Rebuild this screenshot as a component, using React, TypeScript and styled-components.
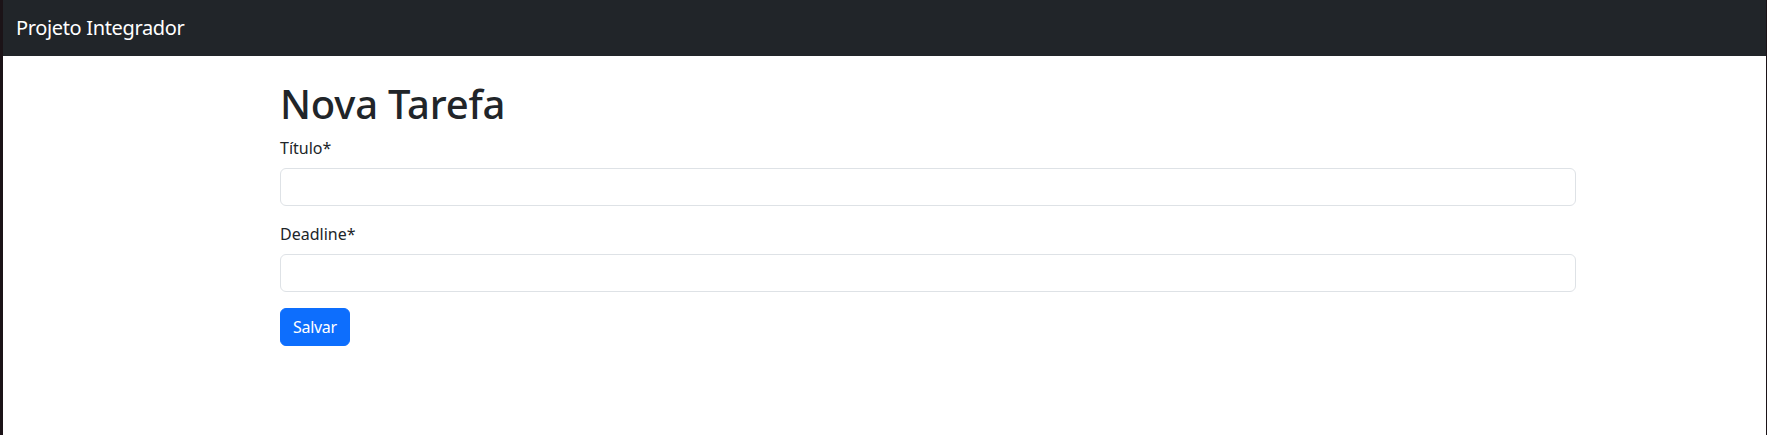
import React from "react";
import styled, { createGlobalStyle } from "styled-components";

const GlobalStyle = createGlobalStyle`
  * { box-sizing: border-box; }
  html, body { margin: 0; padding: 0; background: #fff; }
  body {
    font-family: "Noto Sans", "Open Sans", sans-serif;
    color: #212529;
    font-size: 16px;
    line-height: 1.5;
    border-left: 3px solid #1b1317;
    border-right: 1px solid #1b1317;
    min-height: 435px;
  }
`;

const Navbar = styled.nav`
  height: 56px;
  background: #212529;
  display: flex;
  align-items: center;
  padding: 0 13px;
`;

const Brand = styled.a`
  color: #fff;
  font-size: 20px;
  line-height: 30px;
  letter-spacing: -0.35px;
  text-decoration: none;
`;

const Main = styled.main`
  width: 1296px;
  margin-left: 277px;
  padding-top: 24px;
`;

const Title = styled.h1`
  margin: 0 0 8px;
  font-size: 40px;
  font-weight: 500;
  line-height: 48px;
  letter-spacing: -0.2px;
  color: #212529;
`;

const Form = styled.form`
  display: flex;
  flex-direction: column;
  align-items: flex-start;
`;

const Field = styled.div`
  width: 100%;
  margin-bottom: 16px;
`;

const Label = styled.label`
  display: block;
  font-size: 16px;
  line-height: 24px;
  margin-bottom: 8px;
`;

const Input = styled.input`
  display: block;
  width: 100%;
  height: 38px;
  padding: 6px 12px;
  font-size: 16px;
  font-family: inherit;
  border: 1px solid #dee2e6;
  border-radius: 6px;
  background: #fff;
  color: #212529;
  outline: none;
`;

const Button = styled.button`
  height: 38px;
  padding: 0 12px;
  font-family: inherit;
  font-size: 16px;
  letter-spacing: -0.3px;
  color: #fff;
  background: #0d6efd;
  border: 1px solid #0d6efd;
  border-radius: 6px;
  cursor: pointer;
`;

export default function App() {
  return (
    <>
      <GlobalStyle />
      <Navbar>
        <Brand href="#">Projeto Integrador</Brand>
      </Navbar>
      <Main>
        <Title>Nova Tarefa</Title>
        <Form onSubmit={(e) => e.preventDefault()}>
          <Field>
            <Label htmlFor="titulo">Título*</Label>
            <Input id="titulo" type="text" />
          </Field>
          <Field>
            <Label htmlFor="deadline">Deadline*</Label>
            <Input id="deadline" type="text" />
          </Field>
          <Button type="submit">Salvar</Button>
        </Form>
      </Main>
    </>
  );
}
